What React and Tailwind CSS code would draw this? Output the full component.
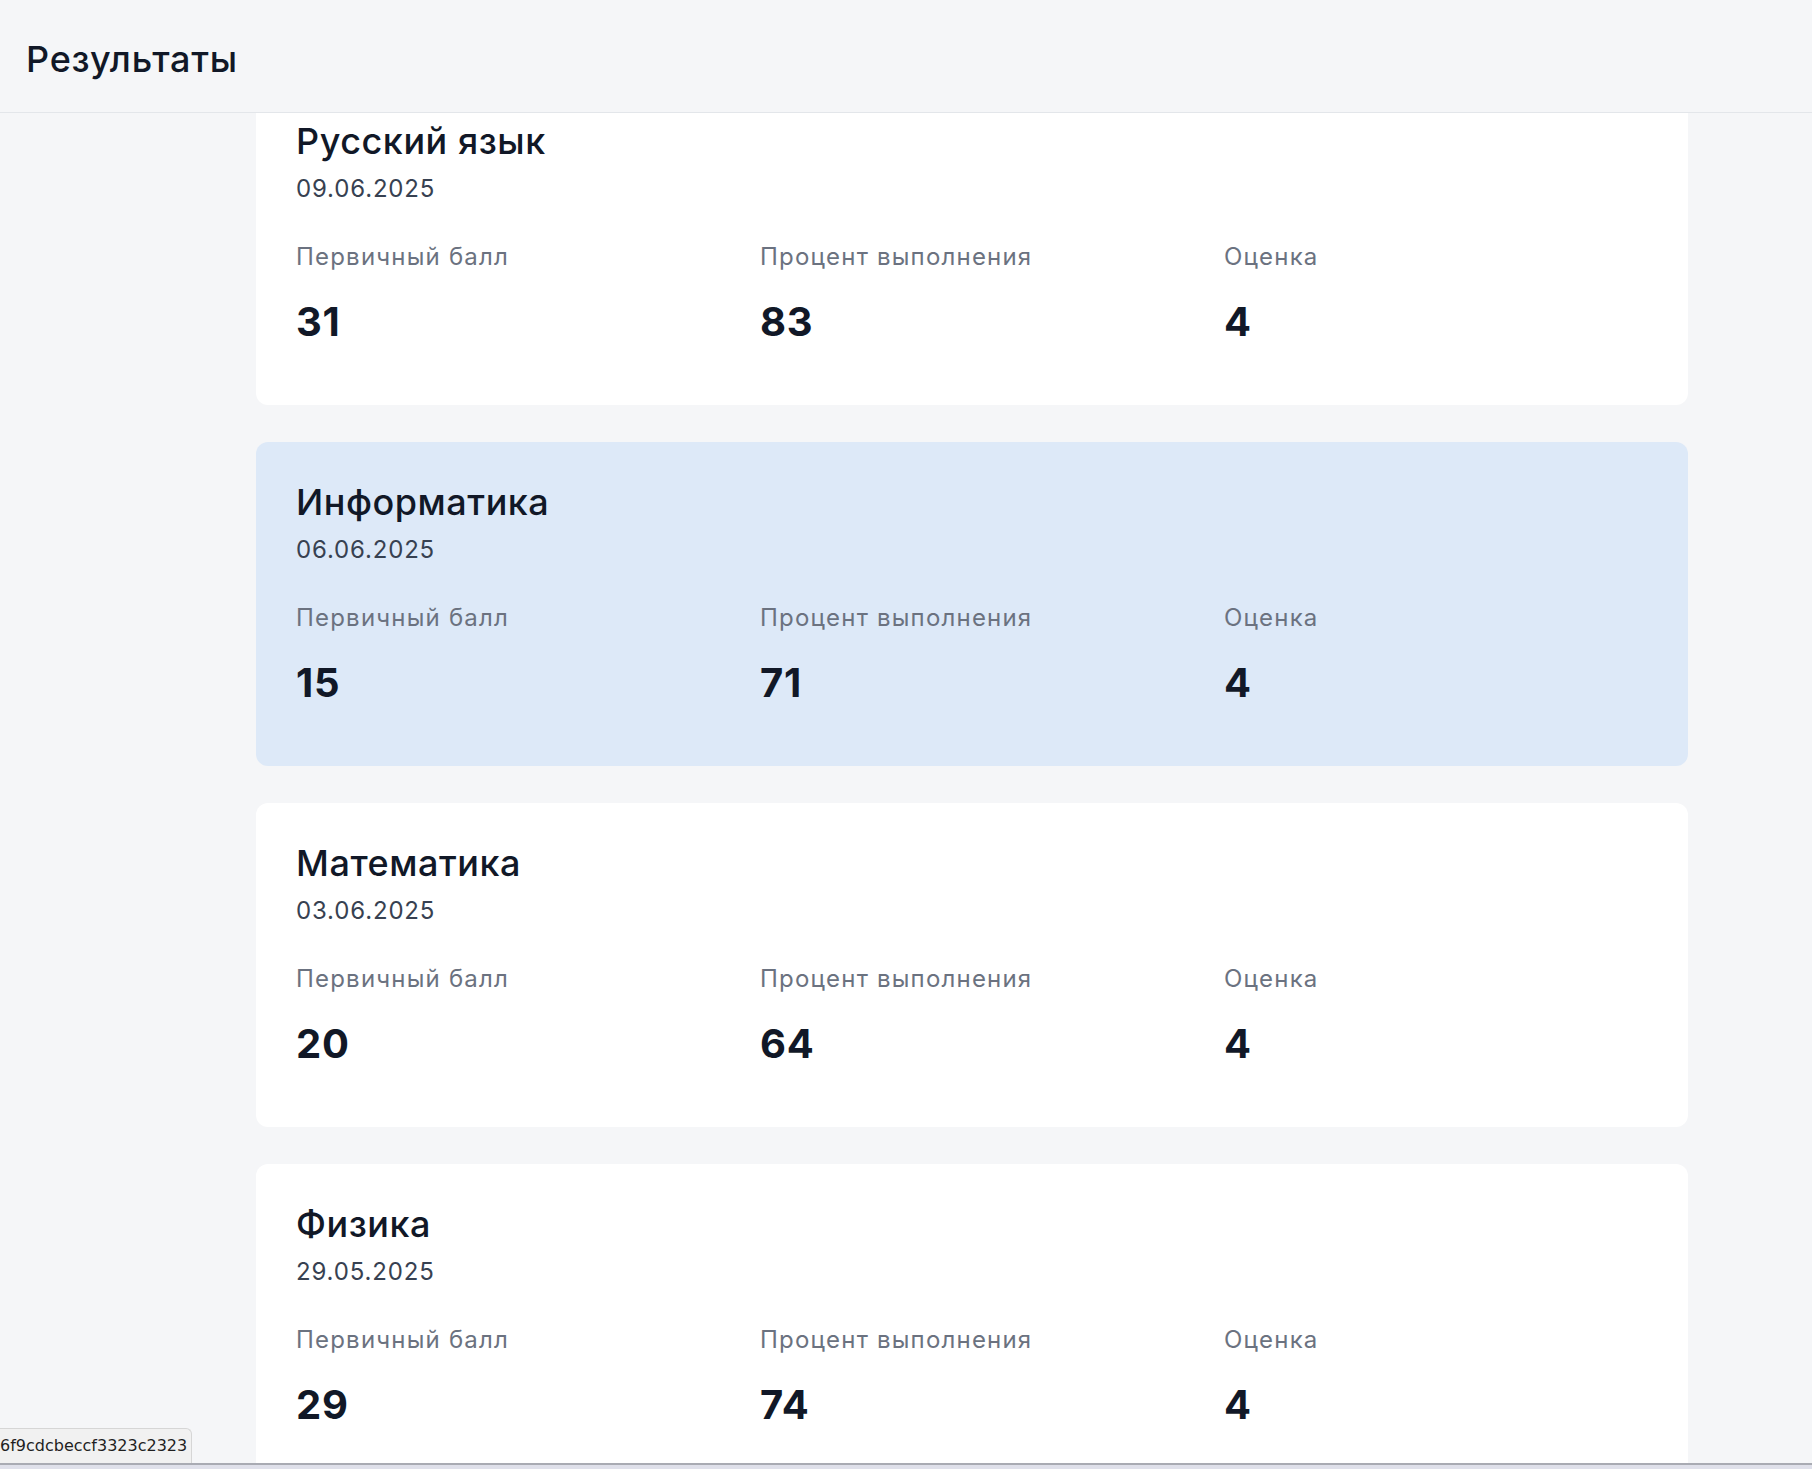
const results = [
  { subject: 'Русский язык', date: '09.06.2025', primary: 31, percent: 83, grade: 4 },
  { subject: 'Информатика', date: '06.06.2025', primary: 15, percent: 71, grade: 4, active: true },
  { subject: 'Математика', date: '03.06.2025', primary: 20, percent: 64, grade: 4 },
  { subject: 'Физика', date: '29.05.2025', primary: 29, percent: 74, grade: 4 },
]

function Stat({ label, value }) {
  return (
    <div className="flex flex-col">
      <span className="text-[24px] leading-[32px] tracking-[0.05em] text-[#6b7280]">{label}</span>
      <span className="mt-[27px] text-[40px] leading-[44px] font-bold tracking-[0.02em] text-[#111827]">{value}</span>
    </div>
  )
}

function ResultCard({ item }) {
  return (
    <div
      className={
        item.active
          ? 'rounded-xl bg-[#dde9f8] px-10 pt-10 pb-[61px]'
          : 'rounded-xl bg-white px-10 pt-10 pb-[61px]'
      }
    >
      <h2 className="text-[36px] leading-[40px] font-medium tracking-[0.015em] text-[#111827]">{item.subject}</h2>
      <p className="mt-3 text-[24px] leading-[32px] tracking-[0.035em] text-[#374151]">{item.date}</p>
      <div className="mt-9 grid grid-cols-3 gap-10">
        <Stat label="Первичный балл" value={item.primary} />
        <Stat label="Процент выполнения" value={item.percent} />
        <Stat label="Оценка" value={item.grade} />
      </div>
    </div>
  )
}

export default function App() {
  return (
    <div className="relative h-[1469px] overflow-hidden bg-[#f5f6f8] font-['Inter',sans-serif]">
      {/* sticky header over scrolled list */}
      <header className="absolute inset-x-0 top-0 z-10 flex h-[113px] items-center border-b border-[#e3e6ea] bg-[#f5f6f8] px-[26px] pt-[6px]">
        <h1 className="text-[36px] leading-[40px] font-medium tracking-[0.022em] text-[#111827]">Результаты</h1>
      </header>

      <main className="flex flex-col gap-[37px] pt-[81px] pl-[256px] w-[1688px]">
        {results.map((r) => (
          <ResultCard key={r.subject} item={r} />
        ))}
      </main>

      {/* browser status bubble + bottom edge */}
      <div className="absolute bottom-[6px] left-0 z-20 flex h-[35px] items-center rounded-tr-md border-t border-r border-[#d6d6d6] bg-[#f1f1f1] pr-[4px] font-['DejaVu_Sans',sans-serif] text-[16px] text-[#1f1f1f]">
        6f9cdcbeccf3323c2323
      </div>
      <div className="absolute inset-x-0 bottom-0 z-20 h-[6px] border-t-2 border-[#a9abb3] bg-[#dfe0ea]" />
    </div>
  )
}
